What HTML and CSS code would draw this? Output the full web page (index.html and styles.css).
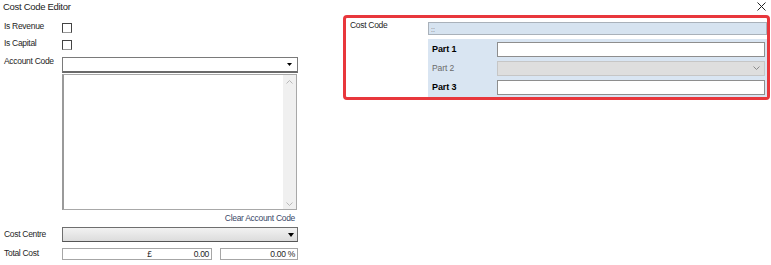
FILE: index.html
```html
<!DOCTYPE html>
<html>
<head>
<meta charset="utf-8">
<link rel="stylesheet" href="styles.css">
</head>
<body>
<div class="window">
  <div class="titlebar">
    <span class="title">Cost Code Editor</span>
    <svg class="close" width="9" height="9" viewBox="0 0 9 9"><path d="M0.5 0.5L8.5 8.5M8.5 0.5L0.5 8.5" stroke="#222" stroke-width="1"/></svg>
  </div>
  <div class="content">
    <div class="left">
      <div class="row row-check">
        <span class="label">Is Revenue</span>
        <span class="check"></span>
      </div>
      <div class="row row-check">
        <span class="label">Is Capital</span>
        <span class="check"></span>
      </div>
      <div class="row row-account">
        <span class="label">Account Code</span>
        <div class="field">
          <div class="combo">
            <svg class="tri" width="5" height="3" viewBox="0 0 5 3"><path d="M0 0H5L2.5 3Z" fill="#000"/></svg>
          </div>
          <div class="listbox">
            <div class="list-area"></div>
            <div class="vscroll">
              <svg width="7" height="4" viewBox="0 0 7 4"><path d="M0.5 3.5L3.5 0.5L6.5 3.5" stroke="#b8b8b8" fill="none"/></svg>
              <svg width="7" height="4" viewBox="0 0 7 4"><path d="M0.5 0.5L3.5 3.5L6.5 0.5" stroke="#b8b8b8" fill="none"/></svg>
            </div>
          </div>
        </div>
      </div>
      <div class="clear-row"><span class="link">Clear Account Code</span></div>
      <div class="row row-centre">
        <span class="label">Cost Centre</span>
        <div class="combo combo-gray">
          <svg class="tri" width="6" height="4" viewBox="0 0 6 4"><path d="M0 0H6L3 4Z" fill="#000"/></svg>
        </div>
      </div>
      <div class="row row-total">
        <span class="label">Total Cost</span>
        <div class="totals">
          <div class="box box-cost"><span class="pound">£</span><span>0.00</span></div>
          <div class="box box-pct"><span>0.00 %</span></div>
        </div>
      </div>
    </div>
    <div class="redbox">
      <div class="cc-label">Cost Code</div>
      <div class="cc-main">
        <div class="cc-field">::</div>
        <div class="parts">
          <div class="part">
            <span class="plabel bold">Part 1</span>
            <div class="pinput"></div>
          </div>
          <div class="part">
            <span class="plabel dim">Part 2</span>
            <div class="pinput pcombo">
              <svg width="7" height="4" viewBox="0 0 7 4"><path d="M0.5 0.5L3.5 3.5L6.5 0.5" stroke="#8a8a8a" fill="none"/></svg>
            </div>
          </div>
          <div class="part">
            <span class="plabel bold">Part 3</span>
            <div class="pinput"></div>
          </div>
        </div>
      </div>
    </div>
  </div>
</div>
</body>
</html>
```

FILE: styles.css
```css
* { box-sizing: border-box; }
html, body { margin: 0; padding: 0; background: #fff; }
body {
  font-family: "Liberation Sans", Arial, sans-serif;
  font-size: 8.5px;
  letter-spacing: -0.3px;
  color: #1e1e1e;
}
.window { width: 771px; height: 265px; overflow: hidden; position: relative; }
.titlebar {
  height: 15px;
  display: flex;
  justify-content: space-between;
  align-items: flex-start;
}
.title {
  font-size: 9.5px;
  line-height: 11px;
  margin: 1px 0 0 3px;
  color: #222;
}
.close { margin: 2px 5px 0 0; }
.content { display: flex; align-items: flex-start; }
.left { width: 298px; padding-left: 4px; padding-top: 6px; }
.row { display: grid; grid-template-columns: 58px 236px; }
.label { line-height: 11px; white-space: nowrap; }
.row-check { height: 17px; }
.check {
  margin-top: 2px;
  width: 10px; height: 10px;
  border: 1px solid #444;
  border-bottom-color: #999;
  background: #fff;
}
.row-account { margin-top: 1px; }
.row-account .label { padding-top: 0; }
.field { margin-top: 1px; }
.combo {
  height: 16px;
  border: 1px solid #7a7a7a;
  border-bottom: 2px solid #6a6a6a;
  background: #fff;
  display: flex;
  justify-content: flex-end;
  align-items: center;
  padding-right: 5px;
}
.listbox {
  margin-top: 1px;
  height: 136px;
  width: 235px;
  border: 1px solid #a8a8a8;
  border-left: 2px solid #9a9a9a;
  display: flex;
}
.list-area { flex: 1; background: #fff; }
.vscroll {
  width: 13px;
  background: #f0f0f0;
  display: flex;
  flex-direction: column;
  justify-content: space-between;
  align-items: center;
  padding: 5px 0 3px;
}
.clear-row {
  width: 291px;
  text-align: right;
  height: 17px;
  line-height: 12px;
  padding-top: 2px;
}
.link { color: #3a4868; }
.row-centre { height: 21px; }
.row-centre .label { padding-top: 2px; }
.combo-gray {
  height: 15px;
  background: linear-gradient(#f2f2f2, #dcdcdc);
  border: 1px solid #6e6e6e;
  border-bottom: 1px solid #555;
  padding-right: 3px;
}
.totals { display: flex; gap: 8px; }
.box {
  height: 12px;
  border: 1px solid #a6a6a6;
  background: #fff;
  display: flex;
  align-items: center;
  justify-content: flex-end;
  padding-right: 2px;
  line-height: 10px;
}
.box-cost { width: 150px; }
.pound { margin-right: 42px; }
.box-pct { width: 78px; }
.redbox {
  margin-left: 45px;
  width: 427px;
  height: 85px;
  border: 3px solid #e8373c;
  border-radius: 4px;
  display: flex;
}
.cc-label { width: 82px; padding: 2px 0 0 4px; line-height: 11px; }
.cc-main { flex: 1; padding-top: 4px; }
.cc-field {
  height: 13px;
  background: #d6e3f0;
  border: 1px solid #a9b1ba;
  font-size: 7px;
  line-height: 13px;
  color: #6a6a6a;
  padding-left: 2px;
  letter-spacing: 0;
}
.parts {
  margin-top: 4px;
  height: 58px;
  background: #d9e5f2;
  padding: 3px 2px 0 0;
  display: flex;
  flex-direction: column;
  gap: 5px;
}
.part {
  display: flex;
  align-items: center;
  height: 14px;
}
.plabel { width: 69px; padding-left: 4px; font-size: 9px; letter-spacing: -0.1px; }
.bold { font-weight: bold; color: #000; }
.dim { color: #6a6a6a; font-size: 8.5px; }
.pinput {
  flex: 1;
  height: 15px;
  background: #fff;
  border: 1px solid #8e8e8e;
}
.pcombo {
  background: #dedede;
  border-color: #c6c6c6;
  display: flex;
  align-items: center;
  justify-content: flex-end;
  padding-right: 4px;
}
```
